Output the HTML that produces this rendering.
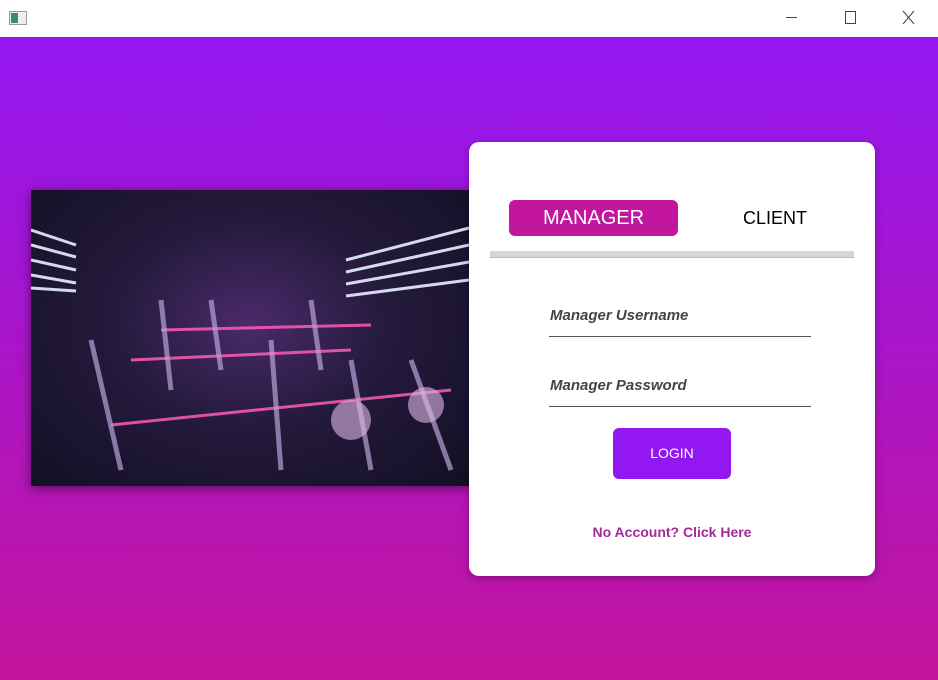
<!DOCTYPE html>
<html><head><style>
*{margin:0;padding:0;box-sizing:border-box}
body{width:938px;height:680px;overflow:hidden;font-family:"Liberation Sans",sans-serif;position:relative;background:#fff}
.title{position:absolute;left:0;top:0;width:938px;height:37px;background:#fff}
.bg{position:absolute;left:0;top:37px;width:938px;height:643px;background:linear-gradient(#9317f1,#c2149c)}
.img{position:absolute;left:31px;top:190px;width:438px;height:296px;background:radial-gradient(ellipse at 50% 45%,#4a2a6a 0%,#241a3c 45%,#120f24 100%);box-shadow:0 2px 10px rgba(0,0,0,.5);overflow:hidden}
.card{position:absolute;left:469px;top:142px;width:406px;height:434px;background:#fff;border-radius:10px;box-shadow:0 2px 8px rgba(0,0,0,.3)}
.mgr{position:absolute;left:40px;top:58px;width:169px;height:36px;background:#c2169e;border-radius:6px;color:#fff;font-size:20px;text-align:center;line-height:36px}
.cli{position:absolute;left:274px;top:66px;font-size:18px;color:#000}
.bar{position:absolute;left:21px;top:109px;width:364px;height:7px;background:#d6d6d6;border-bottom:1px solid #bbb}
.lbl{position:absolute;left:81px;font-size:15px;font-weight:bold;font-style:italic;color:#444}
.ln{position:absolute;left:80px;width:262px;height:1px;background:#555}
.btn{position:absolute;left:144px;top:286px;width:118px;height:51px;background:#9317f1;border-radius:6px;color:#fff;text-align:center;line-height:51px;font-size:14px}
.link{position:absolute;left:0;width:406px;top:382px;text-align:center;color:#a32a9a;font-weight:bold;font-size:14px}
</style></head><body>
<div class="title">
<svg width="938" height="37" style="position:absolute;left:0;top:0">
<rect x="9.5" y="11.5" width="17" height="13" fill="#eee" stroke="#999"/><rect x="11" y="13" width="7" height="10" fill="#3a8a7a"/>
<line x1="786" y1="17.5" x2="797" y2="17.5" stroke="#444"/>
<rect x="845.5" y="11.5" width="10" height="12" fill="none" stroke="#444"/>
<path d="M903 11L914 24M914 11L903 24" stroke="#444"/>
</svg></div>
<div class="bg"></div>
<div class="img">
<svg width="438" height="296">
<g stroke-width="3" stroke="#e8f0ff" opacity=".9">
<line x1="0" y1="40" x2="45" y2="55"/><line x1="0" y1="55" x2="45" y2="67"/><line x1="0" y1="70" x2="45" y2="80"/><line x1="0" y1="85" x2="45" y2="93"/><line x1="0" y1="98" x2="45" y2="101"/>
<line x1="315" y1="70" x2="438" y2="38"/><line x1="315" y1="82" x2="438" y2="55"/><line x1="315" y1="94" x2="438" y2="72"/><line x1="315" y1="106" x2="438" y2="90"/>
</g>
<g stroke="#ff5ab8" stroke-width="3" opacity=".85">
<line x1="130" y1="140" x2="340" y2="135"/><line x1="80" y1="235" x2="420" y2="200"/><line x1="100" y1="170" x2="320" y2="160"/>
</g>
<g stroke="#b9a2d6" stroke-width="5" fill="none" opacity=".7">
<path d="M60 150 L90 280"/><path d="M130 110 L140 200"/><path d="M240 150 L250 280"/><path d="M320 170 L340 280"/><path d="M380 170 L420 280"/><path d="M180 110 L190 180"/><path d="M280 110 L290 180"/>
</g>
<circle cx="320" cy="230" r="20" fill="#e0b8e8" opacity=".6"/><circle cx="395" cy="215" r="18" fill="#e0b8e8" opacity=".6"/>
</svg></div>
<div class="card">
<div class="mgr">MANAGER</div>
<div class="cli">CLIENT</div>
<div class="bar"></div>
<div class="lbl" style="top:165px">Manager Username</div>
<div class="ln" style="top:194px"></div>
<div class="lbl" style="top:235px">Manager Password</div>
<div class="ln" style="top:264px"></div>
<div class="btn">LOGIN</div>
<div class="link">No Account? Click Here</div>
</div>
</body></html>
